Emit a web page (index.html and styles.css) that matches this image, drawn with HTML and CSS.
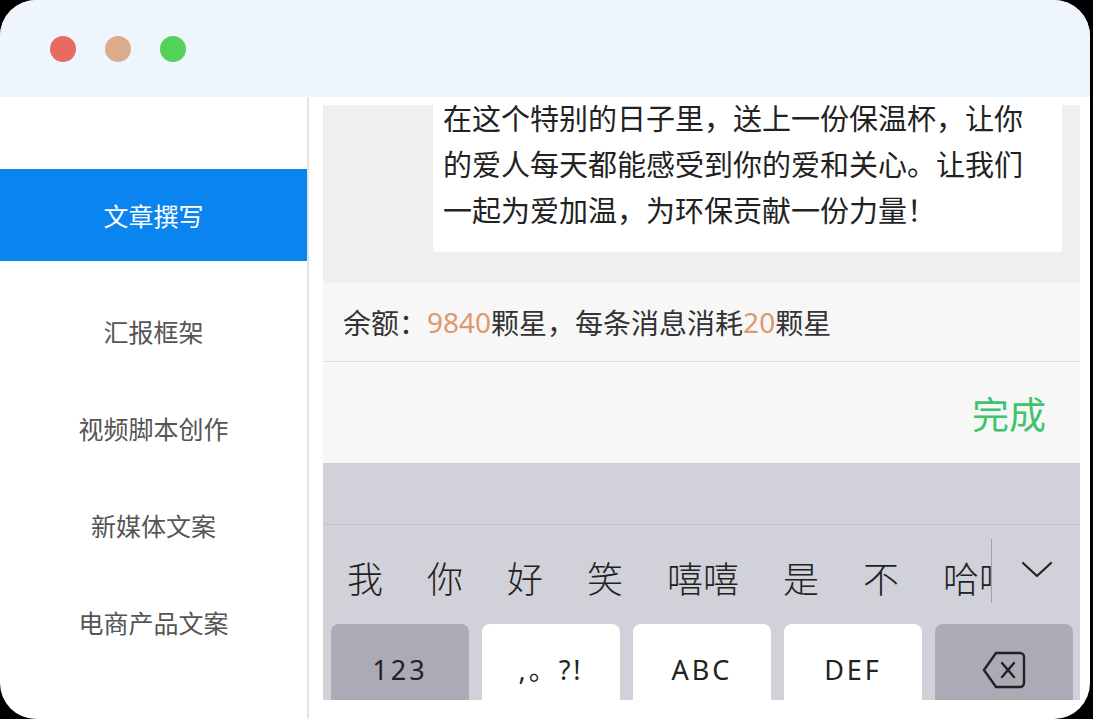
FILE: index.html
```html
<!DOCTYPE html>
<html lang="zh-CN">
<head>
<meta charset="utf-8">
<title>文章撰写</title>
<link rel="stylesheet" href="styles.css">
</head>
<body>
<div class="window">
  <div class="titlebar">
    <span class="dot dot-red"></span>
    <span class="dot dot-yellow"></span>
    <span class="dot dot-green"></span>
  </div>
  <div class="main">
    <nav class="sidebar">
      <div class="item active">文章撰写</div>
      <div class="item">汇报框架</div>
      <div class="item">视频脚本创作</div>
      <div class="item">新媒体文案</div>
      <div class="item">电商产品文案</div>
    </nav>
    <section class="content">
      <div class="phone">
        <div class="chat">
          <div class="bubble">在这个特别的日子里，送上一份保温杯，让你<br>的爱人每天都能感受到你的爱和关心。让我们<br>一起为爱加温，为环保贡献一份力量！</div>
        </div>
        <div class="balance">余额：<span class="num">9840</span>颗星，每条消息消耗<span class="num">20</span>颗星</div>
        <div class="done-bar"><span class="done">完成</span></div>
        <div class="keyboard">
          <div class="kb-top"></div>
          <div class="candidates">
            <div class="cand-list">
              <span>我</span><span>你</span><span>好</span><span>笑</span><span>嘻嘻</span><span>是</span><span>不</span><span>哈哈</span>
            </div>
            <div class="cursor"></div>
            <div class="chevron">
              <svg width="32" height="17" viewBox="0 0 32 17"><polyline points="2,2 16,15 30,2" fill="none" stroke="#222" stroke-width="2.2" stroke-linecap="round" stroke-linejoin="round"/></svg>
            </div>
          </div>
          <div class="keys">
            <div class="key dark">123</div>
            <div class="key">,。?!</div>
            <div class="key">ABC</div>
            <div class="key">DEF</div>
            <div class="key dark">
              <svg width="46" height="40" viewBox="0 0 46 40"><path d="M15 3 H39 a4 4 0 0 1 4 4 V33 a4 4 0 0 1 -4 4 H15 L3 20 Z" fill="none" stroke="#222" stroke-width="2.4" stroke-linejoin="round"/><path d="M21 13 L33 27 M33 13 L21 27" stroke="#222" stroke-width="2.4" stroke-linecap="round"/></svg>
            </div>
          </div>
        </div>
      </div>
    </section>
  </div>
</div>
</body>
</html>
```
FILE: styles.css
```css
html, body {
  margin: 0;
  padding: 0;
  background: #000;
}
body {
  font-family: "Noto Sans CJK SC", "Noto Sans", sans-serif;
}
.window {
  width: 1090px;
  height: 719px;
  border-radius: 36px;
  overflow: hidden;
  background: #fff;
  display: flex;
  flex-direction: column;
}
.titlebar {
  height: 97px;
  flex: none;
  background: #eef5fd;
  display: flex;
  align-items: center;
  padding-left: 50px;
  gap: 29px;
}
.dot {
  width: 26px;
  height: 26px;
  border-radius: 50%;
  display: block;
}
.dot-red { background: #e96a60; }
.dot-yellow { background: #dcad8d; }
.dot-green { background: #53d158; }

.main {
  flex: 1;
  display: flex;
  min-height: 0;
}
.sidebar {
  width: 307px;
  flex: none;
  border-right: 2px solid #e4e4e6;
  padding-top: 72px;
  box-sizing: content-box;
}
.item {
  height: 97px;
  display: flex;
  align-items: center;
  justify-content: center;
  font-size: 25px;
  color: #555;
}
.item.active {
  height: 92px;
  margin-bottom: 21px;
  background: #0a85ef;
  color: #fff;
}

.content {
  flex: 1;
  padding: 8px 10px 19px 14px;
  display: flex;
  min-width: 0;
}
.phone {
  flex: 1;
  display: flex;
  flex-direction: column;
  min-width: 0;
}
.chat {
  height: 178px;
  flex: none;
  background: #efeff0;
  overflow: hidden;
  display: flex;
  flex-direction: column;
  justify-content: flex-end;
  padding: 0 18px 31px 110px;
  box-sizing: border-box;
}
.bubble {
  background: #fff;
  border-radius: 4px;
  padding: 0 30px 20px 10px;
  font-size: 29px;
  line-height: 46px;
  color: #222;
  white-space: nowrap;
}
.balance {
  height: 78px;
  flex: none;
  background: #f7f7f7;
  border-bottom: 1px solid #dedee0;
  display: flex;
  align-items: center;
  padding-left: 20px;
  font-size: 28px;
  color: #333;
}
.num {
  color: #dc9a6b;
  font-family: "Noto Sans", "Noto Sans CJK SC", sans-serif;
}
.done-bar {
  height: 101px;
  flex: none;
  background: #f7f7f8;
  display: flex;
  align-items: center;
  justify-content: flex-end;
  padding-right: 34px;
}
.done {
  font-size: 37px;
  color: #3ec46c;
}
.keyboard {
  flex: 1;
  background: #d1d1da;
  display: flex;
  flex-direction: column;
  overflow: hidden;
}
.kb-top {
  height: 61px;
  flex: none;
  border-bottom: 1px solid #c3c3cc;
}
.candidates {
  height: 99px;
  flex: none;
  display: flex;
  align-items: center;
}
.cand-list {
  width: 644px;
  flex: none;
  overflow: hidden;
  white-space: nowrap;
  padding-left: 24px;
  font-size: 36px;
  font-weight: 300;
  color: #222;
  display: flex;
  gap: 44px;
  padding-top: 4px;
}
.cursor {
  width: 1px;
  height: 64px;
  background: #a0a0a8;
  flex: none;
  align-self: flex-start;
  margin-top: 14px;
}
.chevron {
  margin-left: 29px;
  margin-top: -10px;
  display: flex;
}
.keys {
  flex: 1;
  display: flex;
  gap: 13px;
  padding-left: 8px;
}
.key {
  width: 138px;
  height: 90px;
  flex: none;
  background: #fff;
  border-radius: 8px;
  display: flex;
  justify-content: center;
  align-items: flex-start;
  padding-top: 26px;
  box-sizing: border-box;
  font-family: "Noto Sans", "Noto Sans CJK SC", sans-serif;
  font-size: 27px;
  line-height: 40px;
  letter-spacing: 3px;
  color: #222;
}
.key.dark {
  background: #aaabb5;
}
.key svg {
  margin-top: 0;
}
```
